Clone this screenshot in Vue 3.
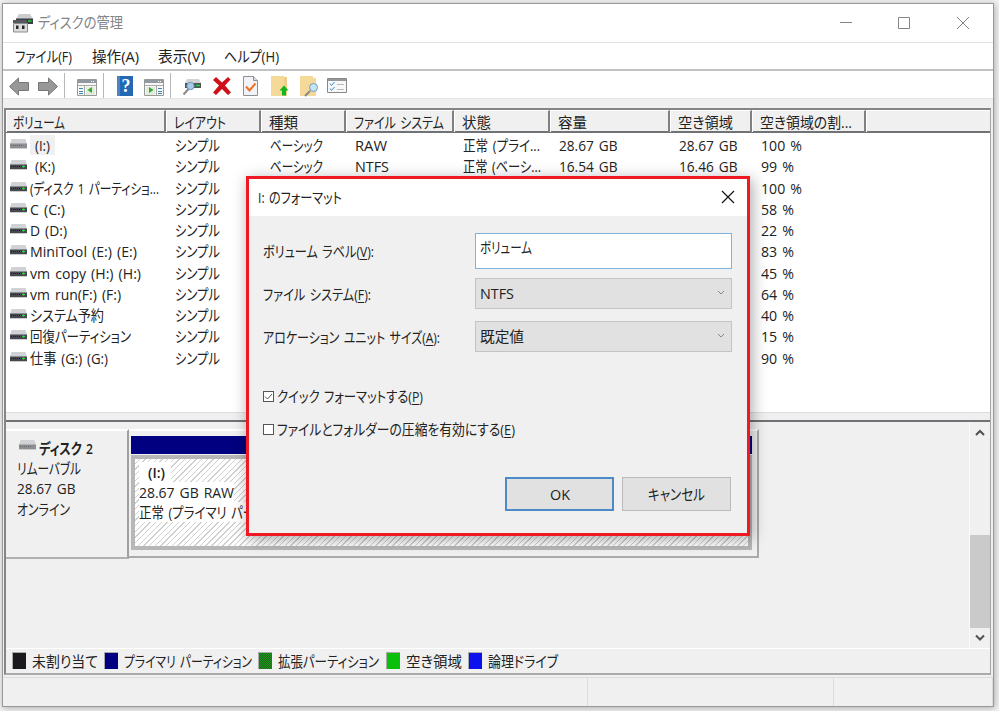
<script setup>
import { h } from 'vue'

const columns = [
  ['ボリューム', 52], ['レイアウト', 52], ['種類', 29], ['ファイル システム', 90],
  ['状態', 29], ['容量', 29], ['空き領域', 55], ['空き領域の割...', 92]
]
const volumes = [
  { name: '(I:)', w: 15, pct: '100 %', pw: 41, inset: true, removable: true, more: ['RAW', 32, '正常 (プライ...', 77, '28.67 GB', '28.67 GB'] },
  { name: '(K:)', w: 20, pct: '99 %', pw: 33, inset: true, more: ['NTFS', 34, '正常 (ベーシ...', 78, '16.54 GB', '16.46 GB'] },
  { name: '(ディスク 1 パーティショ...', w: 129, pct: '100 %', pw: 41 },
  { name: 'C (C:)', w: 35, pct: '58 %', pw: 33 },
  { name: 'D (D:)', w: 37, pct: '22 %', pw: 33 },
  { name: 'MiniTool (E:) (E:)', w: 107, pct: '83 %', pw: 33 },
  { name: 'vm copy (H:) (H:)', w: 111, pct: '45 %', pw: 33 },
  { name: 'vm run(F:) (F:)', w: 91, pct: '64 %', pw: 33 },
  { name: 'システム予約', w: 74, pct: '40 %', pw: 33 },
  { name: '回復パーティション', w: 101, pct: '15 %', pw: 33 },
  { name: '仕事 (G:) (G:)', w: 78, pct: '90 %', pw: 33 }
]
const menus = [['ファイル(F)', 57, 77], ['操作(A)', 47, 66], ['表示(V)', 47, 66], ['ヘルプ(H)', 55, 60]]
const legend = [
  ['未割り当て', 66, 92, 'black'], ['プライマリ パーティション', 128, 154, 'navy'],
  ['拡張パーティション', 101, 128, 'extended'], ['空き領域', 56, 82, 'green'], ['論理ドライブ', 70, 100, 'blue']
]

// Condenses a label horizontally to the width reserved for it.
const vFit = {
  mounted(el, { value }) {
    const natural = el.getBoundingClientRect().width
    el.style.transform = `scaleX(${value / natural})`
    el.style.marginRight = `${value - natural}px`
  }
}

const Drive = (props) => h('svg', { width: 17, height: 11, viewBox: '0 0 17 11' }, [
  h('path', { d: 'M1.5 0h14L17 5H0z', fill: '#d0d2d5' }),
  h('path', { d: 'M0 4.5h17V9H0z', fill: props.removable ? '#8c8e91' : '#45494f' }),
  h('path', { d: 'M0 9h17v1H0z', fill: '#cdcdcd' }),
  h('path', { d: 'M1 6.5h11', stroke: props.removable ? '#66686c' : '#202329', 'stroke-dasharray': '1 1' }),
  props.removable ? null : h('path', { d: 'M12 6.5h3M13.5 5.500v2', stroke: '#27e436', 'stroke-width': 1.2 })
])
Drive.props = { removable: Boolean }
</script>

<template>
  <div class="desktop">
    <div class="window">
      <header class="titlebar">
        <svg class="app-icon" width="20" height="20" viewBox="0 0 20 20">
          <path d="M6 1h11l3 5H3z" fill="#cbccd0" /><path d="M3 5.500h17V11H3z" fill="#3a3d42" />
          <path d="M15 8h3.500" stroke="#25d83a" stroke-width="1.5" />
          <path d="M0 7h14v3H0z" fill="#55585c" />
          <path d="M.5 10.500h14v8.500h-14z" fill="#dcdcdc" stroke="#8b8b8b" />
          <path d="M3 12.500h2.500V16H3zM9 12.500h2.500V16H9z" fill="#26282b" />
        </svg>
        <div class="title"><span v-fit="85" class="t">ディスクの管理</span></div>
        <svg class="winctl" width="132" height="14" viewBox="0 0 132 14" fill="none" stroke="#858585">
          <path d="M0 6.5h12M58.5 1.5h11v11h-11zM117 1l12 12M129 1l-12 12" />
        </svg>
      </header>

      <nav class="menubar">
        <div v-for="m in menus" :key="m[0]" class="menu" :style="{ width: m[2] + 'px' }"><span v-fit="m[1]" class="t">{{ m[0] }}</span></div>
      </nav>

      <div class="toolbar">
        <svg width="360" height="28" viewBox="0 0 360 28">
          <g fill="#989898" stroke="#777">
            <path d="M6.5 15.500l9-8.500v4.500h10v8h-10v4.500z" />
            <path d="M54.500 15.500l-9-8.500v4.500h-10v8h10v4.500z" />
          </g>
          <path d="M61.500 2v25M100.500 2v25M167.500 2v25" stroke="#b8b8b8" />
          <g>
            <path d="M74.500 8.500h19v16h-19z" fill="#f7f7f7" stroke="#999" />
            <path d="M75 9h18v3H75z" fill="#8f999f" /><path d="M88 10.500h4" stroke="#fff" stroke-dasharray="1 1" />
            <path d="M75 14.500h18M81.500 15v9" stroke="#aaa" />
            <path d="M76 17.500h4M76 20.500h4M76 22.500h4" stroke="#4084b4" />
            <path d="M83 16h9v8h-9z" fill="#e0eddb" /><path d="M89 16v6l-4.500-3z" fill="#3aa537" />
          </g>
          <g>
            <path d="M114 5h16v20h-16z" fill="#2467b3" /><path d="M114 5h3v20h-3z" fill="#4e84bd" />
            <text x="118.500" y="21" fill="#fff" class="help">?</text>
          </g>
          <g>
            <path d="M141.500 8.500h19v16h-19z" fill="#f7f7f7" stroke="#999" />
            <path d="M142 9h18v3h-18z" fill="#8f999f" /><path d="M155 10.500h4" stroke="#fff" stroke-dasharray="1 1" />
            <path d="M142 14.500h18M153.500 15v9" stroke="#aaa" />
            <path d="M155 17.500h4M155 20.500h4M155 22.500h4" stroke="#4084b4" />
            <path d="M143 16h9v8h-9z" fill="#e0eddb" /><path d="M146 16v6l4.500-3z" fill="#3aa537" />
          </g>
          <g>
            <path d="M184 8h12l2 4h-16z" fill="#d2d3d4" /><path d="M182 12h16v5h-16z" fill="#505358" />
            <path d="M193 14.500h4" stroke="#25d83a" stroke-width="1.500" />
            <path d="M185.500 18l-5 5.500" stroke="#888" stroke-width="2" />
            <circle cx="187.500" cy="15" r="3.700" fill="#a8cce8" stroke="#6c94b8" />
          </g>
          <path d="M210 9l3-3 6 5.500 6-5.500 2.500 2.500-5.500 6 6 7-3 2.500-6-6-6 6-3-2.500 6-7z" fill="#cf1018" />
          <g>
            <path d="M240.500 5.500h10l4 4v15h-14z" fill="#f3f3f7" stroke="#8e8e95" /><path d="M250.500 5.500v4h4" fill="#ddd" stroke="#8e8e95" />
            <path d="M243 15.500l3.500 4 6-7" fill="none" stroke="#f07025" stroke-width="2" />
          </g>
          <g>
            <path d="M268 5h13v2h3v18h-16z" fill="#f5d999" /><path d="M281 6h3v19h-3z" fill="#ecce8a" />
            <path d="M281 14.500l4.500 5h-2.500v5h-4v-5h-2.500z" fill="#12b51d" />
          </g>
          <g>
            <path d="M297 5h13v2h3v18h-16z" fill="#f5d999" />
            <path d="M307 20l-5 5" stroke="#888" stroke-width="2" /><circle cx="310.500" cy="16.500" r="4" fill="#c4e5f6" stroke="#719db5" />
          </g>
          <g>
            <path d="M324.500 7.500h19v14h-19z" fill="#f8f8f8" stroke="#888" /><path d="M325 8h18v2h-18z" fill="#8f999f" />
            <path d="M327 12.500l1.500 2 3-3.500M327 17.500l1.500 2 3-3.500" fill="none" stroke="#358bd0" /><path d="M334 13.500h7M334 18.500h7" stroke="#bbb" />
          </g>
        </svg>
      </div>

      <main class="panes">
        <section class="volumes">
          <div class="grid head">
            <div v-for="c in columns" :key="c[0]" class="hcell"><span v-fit="c[1]" class="t">{{ c[0] }}</span></div>
            <div class="hcell last"></div>
          </div>
          <div class="rows">
            <div v-for="v in volumes" :key="v.name" class="grid row">
              <div class="name">
                <Drive class="drive" :removable="v.removable" />
                <div class="label" :class="{ inset: v.inset, current: v.removable }"><span v-fit="v.w" class="t">{{ v.name }}</span></div>
              </div>
              <div class="cell"><span v-fit="45" class="t">シンプル</span></div>
              <template v-if="v.more">
                <div class="cell"><span v-fit="53" class="t">ベーシック</span></div>
                <div class="cell"><span v-fit="v.more[1]" class="t">{{ v.more[0] }}</span></div>
                <div class="cell"><span v-fit="v.more[3]" class="t">{{ v.more[2] }}</span></div>
                <div class="cell"><span v-fit="58.500" class="t">{{ v.more[4] }}</span></div>
                <div class="cell"><span v-fit="58.500" class="t">{{ v.more[5] }}</span></div>
              </template>
              <div class="cell pct"><span v-fit="v.pw" class="t">{{ v.pct }}</span></div>
            </div>
          </div>
          <div class="splitter"></div>
        </section>

        <section class="disks">
          <div class="disk-area">
            <div class="disk-info">
              <div class="line disk-name"><Drive class="disk-icon" removable /><span v-fit="54" class="t">ディスク 2</span></div>
              <div class="line"><span v-fit="64" class="t">リムーバブル</span></div>
              <div class="line"><span v-fit="58.500" class="t">28.67 GB</span></div>
              <div class="line"><span v-fit="53" class="t">オンライン</span></div>
            </div>
            <div class="disk-map">
              <div class="stripe"></div>
              <div class="partition">
                <div class="pline pname"><span v-fit="17" class="t">(I:)</span></div>
                <div class="pline"><span v-fit="95" class="t">28.67 GB RAW</span></div>
                <div class="pline"><span v-fit="172" class="t">正常 (プライマリ パーティション)</span></div>
              </div>
            </div>
          </div>
          <div class="scrollbar">
            <svg width="20" height="20" viewBox="0 0 20 20"><path d="M6 13l4-4 4 4" /></svg>
            <div class="thumb"></div>
            <svg width="20" height="20" viewBox="0 0 20 20"><path d="M6 7.500l4 4 4-4" /></svg>
          </div>
        </section>

        <footer class="legend">
          <div v-for="l in legend" :key="l[0]" class="legend-item" :style="{ width: l[2] + 'px' }">
            <i class="swatch" :class="l[3]"></i><span v-fit="l[1]" class="t">{{ l[0] }}</span>
          </div>
        </footer>
      </main>

      <div class="statusbar"><div></div><div></div><div></div></div>
    </div>

    <div class="dialog">
      <div class="dialog-title">
        <div><span v-fit="84" class="t">I: のフォーマット</span></div>
        <svg width="14" height="14" viewBox="0 0 14 14"><path d="M1 1l12 12M13 1L1 13" stroke="#111" stroke-width="1.200" /></svg>
      </div>
      <div class="form">
        <div class="field tall">
          <div class="caption"><span v-fit="111" class="t">ボリューム ラベル(<u>V</u>):</span></div>
          <div class="input"><span v-fit="52" class="t">ボリューム</span></div>
        </div>
        <div class="field second">
          <div class="caption"><span v-fit="108" class="t">ファイル システム(<u>F</u>):</span></div>
          <div class="select"><span v-fit="34" class="t">NTFS</span><svg width="8" height="6" viewBox="0 0 8 6"><path d="M1 1l3 3 3-3" /></svg></div>
        </div>
        <div class="field third">
          <div class="caption"><span v-fit="177" class="t">アロケーション ユニット サイズ(<u>A</u>):</span></div>
          <div class="select"><span v-fit="44" class="t">既定値</span><svg width="8" height="6" viewBox="0 0 8 6"><path d="M1 1l3 3 3-3" /></svg></div>
        </div>
        <div class="check first">
          <i class="box"><svg width="9" height="9" viewBox="0 0 9 9"><path d="M1 4.500l2.500 2.500 4.500-5" fill="none" stroke="#555" /></svg></i>
          <span v-fit="146" class="t">クイック フォーマットする(<u>P</u>)</span>
        </div>
        <div class="check">
          <i class="box"></i>
          <span v-fit="238" class="t">ファイルとフォルダーの圧縮を有効にする(<u>E</u>)</span>
        </div>
        <div class="buttons">
          <div class="button ok"><span v-fit="20" class="t">OK</span></div>
          <div class="button"><span v-fit="57" class="t">キャンセル</span></div>
        </div>
      </div>
    </div>
  </div>
</template>

<style>
body { background: #ededed; overflow: hidden; }
</style>

<style scoped>
.desktop, .desktop * { box-sizing: border-box; }
.desktop {
  position: relative; width: 999px; height: 711px; padding: 3px 0 0 2px; overflow: hidden;
  background: #f3f3f3; color: #222;
  font: 15px/20px "Open Sans", "Noto Sans CJK JP", sans-serif;
  font-feature-settings: "palt"; word-spacing: 1.500px;
}
svg { display: block; flex: none; }
.t { display: inline-block; white-space: nowrap; transform-origin: 0 50%; }
.window {
  width: 992px; height: 704px; border: 1px solid #999; background: #f0f0f0;
  display: flex; flex-direction: column; box-shadow: 1px 1px 7px #aaa;
}
.titlebar { height: 39px; display: flex; align-items: center; background: #fff; border-bottom: 1px solid #e2e2e2; padding: 0 0 1px 10px; color: #858585; }
.app-icon { margin-right: 5px; }
.title { flex: 1; padding-bottom: 1px; }
.winctl { margin-right: 21px; }
.menubar { height: 28px; display: flex; align-items: center; background: #fff; border-bottom: 2px solid #c1c2c4; padding-left: 12px; }
.toolbar { height: 28px; background: #fff; border-bottom: 1px solid #e4e4e4; }
.help { font: bold 18px "Liberation Serif", serif; }
.panes { height: 567px; margin: 9px 2px 0 1px; border: 2px solid #858585; border-right: 1px solid #a5a5a5; border-bottom-color: #aaa; display: flex; flex-direction: column; }
.volumes { height: 312px; background: #fff; display: flex; flex-direction: column; }
.grid { display: grid; grid-template-columns: 160px 95px 85px 108px 96px 120px 82px 114px 1fr; }
.head { height: 23px; background: #f0f0f0; border-bottom: 2px solid #707276; }
.hcell { border-right: 2px solid #808080; border-left: 1px solid #fff; border-top: 1px solid #fff; padding: 1px 0 0 7px; white-space: nowrap; }
.hcell:first-child { padding-left: 6px; }
.hcell.last { border-right: 0; }
.rows { flex: 1; padding-top: 2px; }
.row { height: 21.25px; }
.name { display: flex; align-items: flex-start; }
.drive { margin: 4px 3px 0 4px; }
.label { height: 20px; }
.label.inset { padding: 0 5px; }
.label.current { background: #f0f0f0; }
.cell { padding-left: 8.500px; white-space: nowrap; }
.pct { grid-column: 8; }
.splitter { height: 10px; background: #efefef; border-top: 1px solid #ddd; border-bottom: 2px solid #6f7174; }
.disks { height: 226px; display: flex; justify-content: space-between; }
.disk-area { display: flex; padding-top: 7px; }
.disk-info { width: 123px; height: 130px; border-top: 2px solid #fff; border-right: 2px solid #a0a0a0; border-bottom: 2px solid #b0b0b0; padding: 7px 0 0 11px; }
.line { height: 20.200px; white-space: nowrap; }
.disk-name { display: flex; font-weight: 600; }
.disk-icon { margin: 2px 3px 0 2px; }
.disk-map { width: 630px; height: 129px; border-top: 2px solid #fff; border-right: 2px solid #aaa; border-bottom: 2px solid #aaa; padding: 5px 5px 6px 2px; display: flex; flex-direction: column; }
.stripe { height: 18px; background: #000080; margin-bottom: 1px; }
.partition {
  flex: 1; border: 4px solid #b7b7b7; padding: 3px 0 0 4px;
  background: repeating-linear-gradient(135deg, #fff 0 3px, #d0d0d0 3px 4px);
}
.pline { height: 20px; width: max-content; background: #fff; white-space: nowrap; }
.pname { font-weight: 600; padding: 0 6px 0 9px; }
.scrollbar { width: 21px; border-left: 1px solid #fafafa; display: flex; flex-direction: column; }
.scrollbar path { fill: none; stroke: #505050; stroke-width: 2; }
.thumb { height: 93px; margin-top: auto; background: #cacaca; }
.legend { flex: 1; display: flex; align-items: center; border-top: 1px solid #fff; padding: 0 0 1px 6px; }
.legend-item { display: flex; align-items: center; white-space: nowrap; }
.swatch { width: 14px; height: 17px; margin-right: 6px; flex: none; border: 1px solid #aaa; border-width: 1px 0 0 1px; }
.black { background: #1c191e; }
.navy { background: #000080; }
.extended { background: repeating-conic-gradient(#008000 0 25%, #3a7f32 0 50%) 0 0 / 2px 2px; }
.green { background: #0bc00b; }
.blue { background: #0b12ee; }
.statusbar { flex: 1; margin-top: 2px; border-top: 1px solid #ddd; display: grid; grid-template-columns: 585px 246px 1fr; }
.statusbar div { border-right: 1px solid #dcdcdc; }
.dialog {
  position: absolute; left: 246px; top: 176px; width: 504px; height: 360px; border: 3px solid #ee1922;
  background: #f0f0f0; box-shadow: 2px 3px 14px rgba(0, 0, 0, .35); display: flex; flex-direction: column;
}
.dialog-title { height: 37px; background: #fff; padding: 0 12px 2px 9px; display: flex; align-items: center; justify-content: space-between; }
.form { flex: 1; padding: 17px 15px 0 14px; white-space: nowrap; }
.field { display: flex; align-items: center; }
.caption { width: 212px; }
.input { width: 257px; height: 36px; background: #fff; border: 1px solid #7fb2dc; padding: 3px 4px; }
.select { width: 257px; height: 31px; background: #e1e1e1; border: 1px solid #c4c4c4; padding: 0 6px 1px 4px; display: flex; align-items: center; justify-content: space-between; }
.select path { fill: none; stroke: #888; }
.second { margin-top: 9px; }
.third { margin-top: 12px; }
.check { display: flex; align-items: center; height: 20px; }
.check.first { margin: 34px 0 13px; }
.box { width: 11px; height: 11px; border: 1px solid #555; background: #fff; margin-right: 3px; flex: none; }
.buttons { display: flex; justify-content: flex-end; gap: 8px; margin: 38px 1px 0 0; }
.button { width: 109px; height: 34px; background: #e1e1e1; border: 1px solid #bababa; display: flex; justify-content: center; align-items: center; }
.button.ok { border: 2px solid #4e8ac4; }
u { text-underline-offset: 2px; text-decoration-thickness: 1px; }
</style>
